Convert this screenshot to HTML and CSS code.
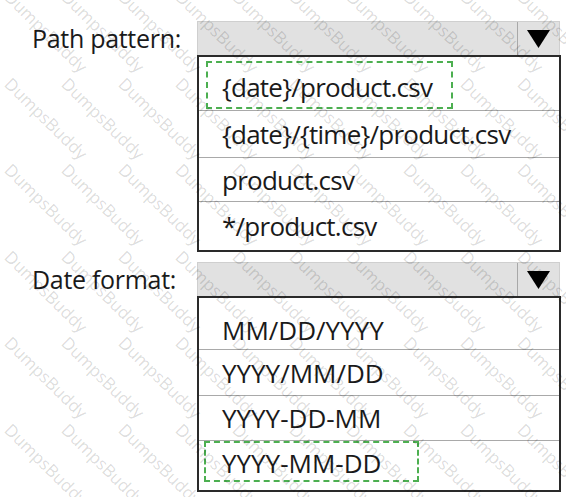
FILE: index.html
```html
<!DOCTYPE html>
<html>
<head>
<meta charset="utf-8">
<link rel="stylesheet" href="styles.css">
</head>
<body>
<div class="page">
  <div class="field field-path">
    <div class="label">Path pattern:</div>
    <div class="control">
      <div class="combo">
        <div class="combo-fill"></div>
        <div class="combo-btn">
          <svg width="23" height="18" viewBox="0 0 23 18"><polygon points="0,0 23,0 11.5,18" fill="#000"/></svg>
        </div>
      </div>
      <ul class="list list-path">
        <li class="item"><span class="mark mark-path">{date}/product.csv</span></li>
        <li class="item">{date}/{time}/product.csv</li>
        <li class="item">product.csv</li>
        <li class="item">*/product.csv</li>
      </ul>
    </div>
  </div>
  <div class="field field-date">
    <div class="label">Date format:</div>
    <div class="control">
      <div class="combo">
        <div class="combo-fill"></div>
        <div class="combo-btn">
          <svg width="23" height="18" viewBox="0 0 23 18"><polygon points="0,0 23,0 11.5,18" fill="#000"/></svg>
        </div>
      </div>
      <ul class="list list-date">
        <li class="item">MM/DD/YYYY</li>
        <li class="item">YYYY/MM/DD</li>
        <li class="item">YYYY-DD-MM</li>
        <li class="item"><span class="mark mark-date">YYYY-MM-DD</span></li>
      </ul>
    </div>
  </div>
</div>
<div class="watermark-clip" aria-hidden="true">
  <div class="watermark">
    <span>DumpsBuddy</span><span>DumpsBuddy</span><span>DumpsBuddy</span><span>DumpsBuddy</span><span>DumpsBuddy</span><span>DumpsBuddy</span><span>DumpsBuddy</span><span>DumpsBuddy</span><span>DumpsBuddy</span><span>DumpsBuddy</span>
    <span>DumpsBuddy</span><span>DumpsBuddy</span><span>DumpsBuddy</span><span>DumpsBuddy</span><span>DumpsBuddy</span><span>DumpsBuddy</span><span>DumpsBuddy</span><span>DumpsBuddy</span><span>DumpsBuddy</span><span>DumpsBuddy</span>
    <span>DumpsBuddy</span><span>DumpsBuddy</span><span>DumpsBuddy</span><span>DumpsBuddy</span><span>DumpsBuddy</span><span>DumpsBuddy</span><span>DumpsBuddy</span><span>DumpsBuddy</span><span>DumpsBuddy</span><span>DumpsBuddy</span>
    <span>DumpsBuddy</span><span>DumpsBuddy</span><span>DumpsBuddy</span><span>DumpsBuddy</span><span>DumpsBuddy</span><span>DumpsBuddy</span><span>DumpsBuddy</span><span>DumpsBuddy</span><span>DumpsBuddy</span><span>DumpsBuddy</span>
    <span>DumpsBuddy</span><span>DumpsBuddy</span><span>DumpsBuddy</span><span>DumpsBuddy</span><span>DumpsBuddy</span><span>DumpsBuddy</span><span>DumpsBuddy</span><span>DumpsBuddy</span><span>DumpsBuddy</span><span>DumpsBuddy</span>
    <span>DumpsBuddy</span><span>DumpsBuddy</span><span>DumpsBuddy</span><span>DumpsBuddy</span><span>DumpsBuddy</span><span>DumpsBuddy</span><span>DumpsBuddy</span><span>DumpsBuddy</span><span>DumpsBuddy</span><span>DumpsBuddy</span>
  </div>
</div>
</body>
</html>
```

FILE: styles.css
```css
* { box-sizing: border-box; }
html, body { margin: 0; padding: 0; background: #fff; }
body {
  font-family: "Open Sans", "Noto Sans", sans-serif;
  color: #1a1a1a;
  width: 566px;
  height: 497px;
  overflow: hidden;
  position: relative;
}
.page {
  padding-top: 21px;
  display: flex;
  flex-direction: column;
  gap: 10px;
}
.field {
  display: grid;
  grid-template-columns: 197px 364px;
  align-items: start;
}
.label {
  font-size: 25px;
  letter-spacing: -0.3px;
  height: 34px;
  display: flex;
  align-items: center;
  padding-left: 32px;
  white-space: nowrap;
}
.combo {
  height: 34px;
  display: flex;
  background: #e1e1e1;
  border: 1px solid #cfcfcf;
  border-bottom: none;
  width: 363px;
}
.combo-fill { flex: 1; }
.combo-btn {
  width: 42px;
  border-left: 1px solid #a8a8a8;
  display: flex;
  align-items: center;
  justify-content: center;
  padding-top: 1px;
}
.list {
  list-style: none;
  margin: 0;
  padding: 0;
  border: 2px solid #2a2a2a;
  width: 364px;
}
.item {
  display: flex;
  align-items: center;
  padding-left: 23px;
  font-size: 26px;
  border-bottom: 1px solid #a9a9a9;
  white-space: nowrap;
}
.list-path .item { letter-spacing: -0.75px; }
.item:last-child { border-bottom: none; }
.list-path .item:nth-child(1) { height: 54px; align-items: flex-start; padding-top: 4px; }
.list-path .item:nth-child(2) { height: 47px; }
.list-path .item:nth-child(3) { height: 44px; }
.list-path .item:nth-child(4) { height: 48px; }
.list-date .item:nth-child(1) { height: 52px; padding-top: 12px; }
.list-date .item:nth-child(2) { height: 46px; }
.list-date .item:nth-child(3) { height: 45px; }
.list-date .item:nth-child(4) { height: 49px; align-items: flex-start; }
.mark {
  display: flex;
  align-items: center;
  border: 2px dashed #4caf50;
  margin-left: -16px;
  padding-left: 14px;
}
.mark-path { width: 247px; height: 48px; padding-top: 3px; }
.mark-date { width: 215px; height: 41px; margin-left: -18px; padding-left: 16px; padding-top: 2px; }

.watermark-clip {
  position: absolute;
  inset: 0;
  overflow: hidden;
  pointer-events: none;
}
.watermark {
  position: absolute;
  left: 18px;
  top: -12px;
  display: grid;
  grid-template-columns: repeat(10, 57px);
  grid-template-rows: repeat(6, 86.5px);
}
.watermark span {
  display: flex;
  align-items: center;
  justify-content: center;
  font-family: "Open Sans", sans-serif;
  font-size: 17px;
  color: rgba(0, 0, 0, 0.15);
  white-space: nowrap;
  transform: rotate(44.5deg);
  width: 57px;
}
```
